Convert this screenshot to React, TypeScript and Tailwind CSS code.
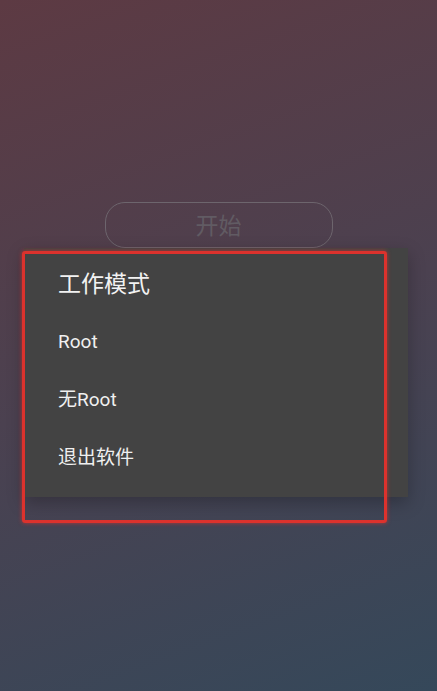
const items = ['Root', '无Root', '退出软件']

const App = () => {
  return (
    <div
      className="relative h-[691px] w-full overflow-hidden bg-linear-[160deg] from-[#5d3a43] via-[#4b4150] to-[#35485a]"
      style={{ fontFamily: 'Roboto, "Noto Sans CJK SC", sans-serif' }}
    >
      <div className="flex flex-col pt-[202px]">
        <button className="mx-auto flex h-[46px] w-[228px] items-center justify-center rounded-[20px] border border-[#6d656d] pt-[5px] text-[23px] text-[#615b63]">
          开始
        </button>

        <div className="ml-[24px] flex h-[249px] w-[384px] flex-col bg-[#434343] pl-[34px] pt-[21px] shadow-[0_6px_16px_rgba(0,0,0,0.25)]">
          <div className="h-[32px] text-[23px] leading-[32px] text-[#f2f2f2]">工作模式</div>
          <div className="mt-[12px] flex flex-col">
            {items.map((label) => (
              <div
                key={label}
                className="flex h-[58px] items-center text-[19px] text-[#f0f0f0]"
              >
                {label}
              </div>
            ))}
          </div>
        </div>
      </div>

      {/* highlight annotation */}
      <div className="pointer-events-none absolute left-[22px] top-[251px] h-[272px] w-[365px] rounded-[3px] border-[3px] border-[#dc322d] shadow-[0_0_4px_rgba(230,50,45,0.7)]" />
    </div>
  )
}

export default App
